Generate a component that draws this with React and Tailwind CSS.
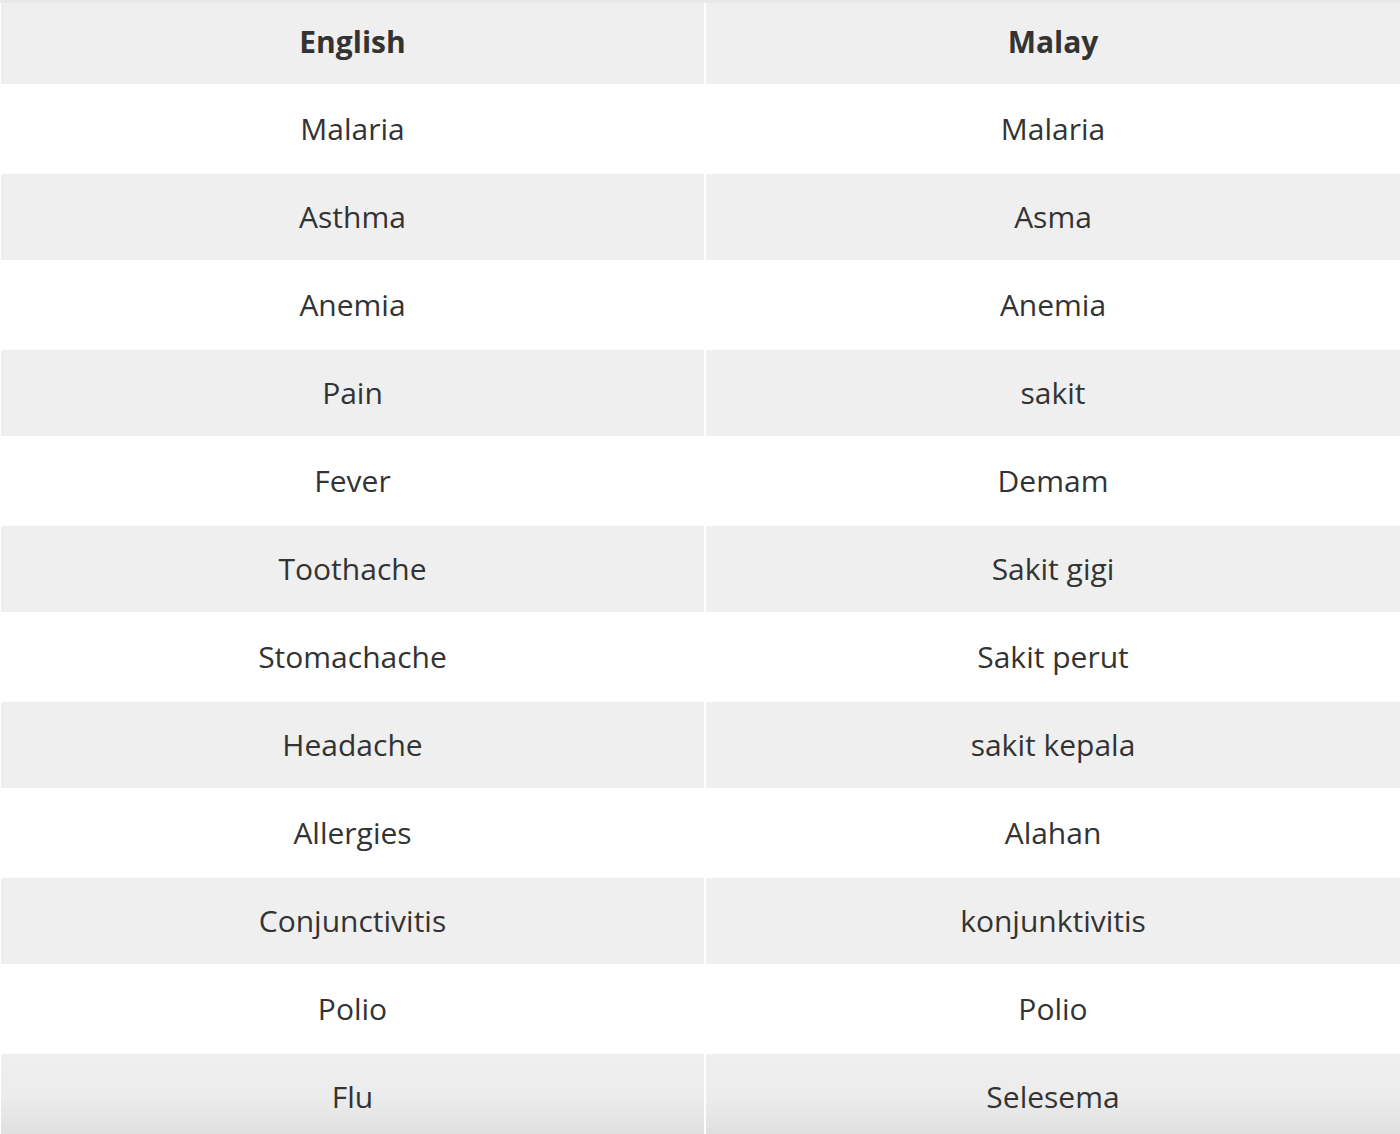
import React from 'react';

const rows = [
  ['Malaria', 'Malaria'],
  ['Asthma', 'Asma'],
  ['Anemia', 'Anemia'],
  ['Pain', 'sakit'],
  ['Fever', 'Demam'],
  ['Toothache', 'Sakit gigi'],
  ['Stomachache', 'Sakit perut'],
  ['Headache', 'sakit kepala'],
  ['Allergies', 'Alahan'],
  ['Conjunctivitis', 'konjunktivitis'],
  ['Polio', 'Polio'],
  ['Flu', 'Selesema'],
];

export default function App() {
  return (
    <div className="w-[1400px] h-[1134px] overflow-hidden bg-white text-[#333333] text-[30px]" style={{ fontFamily: '"Open Sans", "Noto Sans", sans-serif' }}>
      <div className="grid grid-cols-[703px_694px] gap-x-[2px] pl-[1px] h-[84px] border-t-[3px] border-[#e9e9e9]">
        <div className="bg-[#efefef] flex items-center justify-center font-bold pb-[5px]">English</div>
        <div className="bg-[#efefef] flex items-center justify-center font-bold pb-[5px]">Malay</div>
      </div>
      {rows.map(([en, ms], i) => {
        const gray = i % 2 === 1;
        const last = i === rows.length - 1;
        const cellBg = last
          ? 'bg-gradient-to-b from-[#efefef] via-[#ececec] to-[#dedede]'
          : gray ? 'bg-[#efefef]' : 'bg-white';
        return (
          <div
            key={en}
            className={`grid grid-cols-[703px_694px] gap-x-[2px] pl-[1px] ${gray ? 'h-[86px]' : 'h-[90px]'}`}
          >
            <div className={`${cellBg} flex items-center justify-center pb-[1px]`}>{en}</div>
            <div className={`${cellBg} flex items-center justify-center pb-[1px]`}>{ms}</div>
          </div>
        );
      })}
    </div>
  );
}
